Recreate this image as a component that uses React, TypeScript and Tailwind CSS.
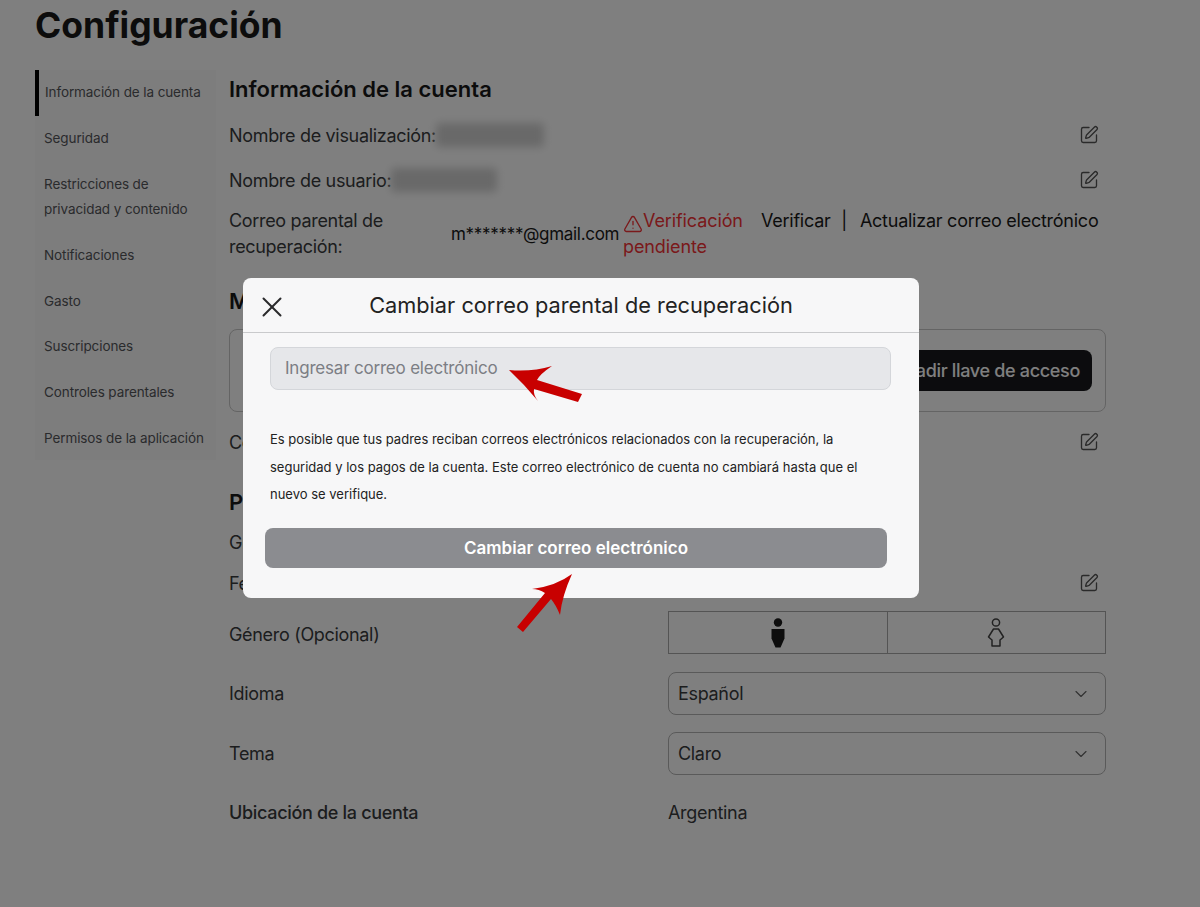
import { ChevronDown, SquarePen, TriangleAlert, X } from 'lucide-react'

const MENU = [
  'Información de la cuenta',
  'Seguridad',
  'Restricciones de privacidad y contenido',
  'Notificaciones',
  'Gasto',
  'Suscripciones',
  'Controles parentales',
  'Permisos de la aplicación',
]

function EditIcon() {
  return <SquarePen size={20} strokeWidth={1.6} className="text-[#555]" />
}

function InfoRow({ label, blurWidth }: { label: string; blurWidth?: number }) {
  return (
    <div className="flex h-[38px] items-center justify-between pr-[7px]">
      <div className="flex items-center">
        <span>{label}</span>
        {blurWidth && <span className="h-[24px] rounded-sm bg-[#d2d2d2] blur-[4px]" style={{ width: blurWidth }} />}
      </div>
      <EditIcon />
    </div>
  )
}

function SelectBox({ value }: { value: string }) {
  return (
    <div className="flex h-[43px] items-center justify-between rounded-lg border border-[#b4b4b4] pl-[9px] pr-[14px]">
      <span>{value}</span>
      <ChevronDown size={20} strokeWidth={1.4} className="text-[#666]" />
    </div>
  )
}

function Man() {
  return (
    <svg width="14" height="30" viewBox="0 0 14 30" fill="#1a1a1a">
      <circle cx="7" cy="4.5" r="4.2" />
      <path d="M0.5 11h13v9.500l-4 9h-5l-4-9z" />
    </svg>
  )
}

function Woman() {
  return (
    <svg width="18" height="30" viewBox="0 0 18 30" fill="none" stroke="#444" strokeWidth="1.5">
      <circle cx="9" cy="4.5" r="3.6" />
      <path d="M6.5 11h5l5 8-3.5 3v6H5v-6l-3.500-3z" strokeLinejoin="round" />
    </svg>
  )
}

export default function App() {
  return (
    <div
      className="relative h-[907px] w-[1200px] overflow-hidden bg-white text-[18px] tracking-[-0.32px] text-[#393b3d]"
      style={{ fontFamily: 'Inter, "Noto Sans", sans-serif' }}
    >
      <div className="px-[35px]">
        <h1 className="h-[70px] pt-[4px] text-[35.5px] leading-[44px] font-bold tracking-normal text-[#191919]">Configuración</h1>
        <div className="flex">
          <nav className="h-[390px] w-[181px] shrink-0 bg-[#fbfbfb] text-[13.5px] leading-[25px] tracking-[-0.1px] text-[#55565a]">
            {MENU.map((item, i) => (
              <div
                key={item}
                className={`py-[10.4px] pr-2 ${i === 0 ? 'border-l-[4px] border-black pl-[6px]' : 'pl-[9px]'}`}
              >
                {item}
              </div>
            ))}
          </nav>
          <main className="ml-[13px] w-[877px]">
            <h2 className="flex h-[38px] items-center pt-[1px] text-[22px] font-semibold tracking-normal text-[#191919]">Información de la cuenta</h2>
            <div className="mt-2">
              <InfoRow label="Nombre de visualización:" blurWidth={108} />
            </div>
            <div className="mt-[7px]">
              <InfoRow label="Nombre de usuario:" blurWidth={106} />
            </div>
            <div className="mt-[9px] flex h-[52px] leading-[26px]">
              <div className="w-[222px] shrink-0">Correo parental de recuperación:</div>
              <div className="w-[172px] shrink-0 pt-[13px] text-[17px] tracking-[-0.3px] whitespace-nowrap text-[#191919]">m*******@gmail.com</div>
              <div className="w-[138px] shrink-0 tracking-[-0.1px] text-[#f53236]">
                <TriangleAlert size={20} strokeWidth={1.6} className="mb-[-4px] inline-block" />
                Verificación pendiente
              </div>
              <div className="tracking-[-0.25px] whitespace-nowrap text-[#191919]">
                Verificar <span className="mr-[8px] ml-[6px]">|</span> Actualizar correo electrónico
              </div>
            </div>
            <h2 className="mt-[22px] flex h-[38px] items-center text-[22px] font-semibold tracking-normal text-[#191919]">Métodos de inicio de sesión</h2>
            <div className="mt-[9px] flex h-[83px] items-center justify-end rounded-lg border border-[#c8c8c8] pr-[13px]">
              <div className="flex h-[41px] w-[200px] items-center justify-end rounded-lg bg-[#18191c] pr-[12px] font-medium text-white">
                Añadir llave de acceso
              </div>
            </div>
            <div className="mt-[11px]">
              <InfoRow label="Contraseña" />
            </div>
            <h2 className="mt-[22px] flex h-[38px] items-center text-[22px] font-semibold tracking-normal text-[#191919]">Personal</h2>
            <div className="mt-[2px] flex h-[38px] items-center">Grupo de edad</div>
            <div className="mt-[3px]">
              <InfoRow label="Fecha de nacimiento" />
            </div>
            <div className="mt-[9px] flex h-[43px] items-center">
              <span className="w-[439px] pt-[3px]">Género (Opcional)</span>
              <div className="flex h-full w-[438px] border border-[#a8a8a8]">
                <div className="flex flex-1 items-center justify-center border-r border-[#a8a8a8]">
                  <Man />
                </div>
                <div className="flex flex-1 items-center justify-center">
                  <Woman />
                </div>
              </div>
            </div>
            <div className="mt-[18px] flex items-center">
              <span className="w-[439px]">Idioma</span>
              <div className="w-[438px]">
                <SelectBox value="Español" />
              </div>
            </div>
            <div className="mt-[17px] flex items-center">
              <span className="w-[439px]">Tema</span>
              <div className="w-[438px]">
                <SelectBox value="Claro" />
              </div>
            </div>
            <div className="mt-[18px] flex h-[38px] items-center font-medium">
              <span className="w-[439px]">Ubicación de la cuenta</span>
              <span className="font-normal">Argentina</span>
            </div>
          </main>
        </div>
      </div>

      <div className="absolute inset-0 bg-black/50" />

      <div className="absolute top-[278px] left-[243px] h-[320px] w-[676px] rounded-lg bg-[#f7f7f8] tracking-normal">
        <div className="relative flex h-[55px] items-center justify-center border-b border-[#c9cacc]">
          <X size={34} strokeWidth={1.4} className="absolute top-[12px] left-[12px] text-[#2a2a2c]" />
          <span className="text-[21.75px] text-[#222]">Cambiar correo parental de recuperación</span>
        </div>
        <div className="mt-[14px] ml-[27px] flex h-[43px] w-[621px] items-center rounded-lg border border-[#d4d6da] bg-[#e6e7ea] px-[14px] pt-[1px] text-[17px] tracking-[-0.2px] text-[#7c7e84]">
          Ingresar correo electrónico
        </div>
        <p className="mt-[36px] ml-[27px] w-[610px] text-[13px] leading-[27.5px] text-[#222]">
          Es posible que tus padres reciban correos electrónicos relacionados con la recuperación, la seguridad y los
          pagos de la cuenta. Este correo electrónico de cuenta no cambiará hasta que el nuevo se verifique.
        </p>
        <div className="mt-[19px] ml-[22px] flex h-[40px] w-[622px] items-center justify-center rounded-lg bg-[#8b8c90] pt-[2px] text-[17px] font-semibold text-white">
          Cambiar correo electrónico
        </div>
      </div>

      {/* annotation arrows */}
      <svg className="absolute top-[360px] left-[505px]" width="82" height="45" viewBox="505 360 82 45" fill="#c80000">
        <path d="M509 370Q532 372 552 366Q540 374 537 380L582 394L578 402L534 389Q533 395 538 401Q524 384 509 370Z" />
      </svg>
      <svg className="absolute top-[570px] left-[512px]" width="66" height="68" viewBox="512 570 66 68" fill="#c80000">
        <path d="M572 574Q562 596 560 615Q556 605 551 599L523 632L517 627L545 593Q539 589 532 589Q556 586 572 574Z" />
      </svg>
    </div>
  )
}
